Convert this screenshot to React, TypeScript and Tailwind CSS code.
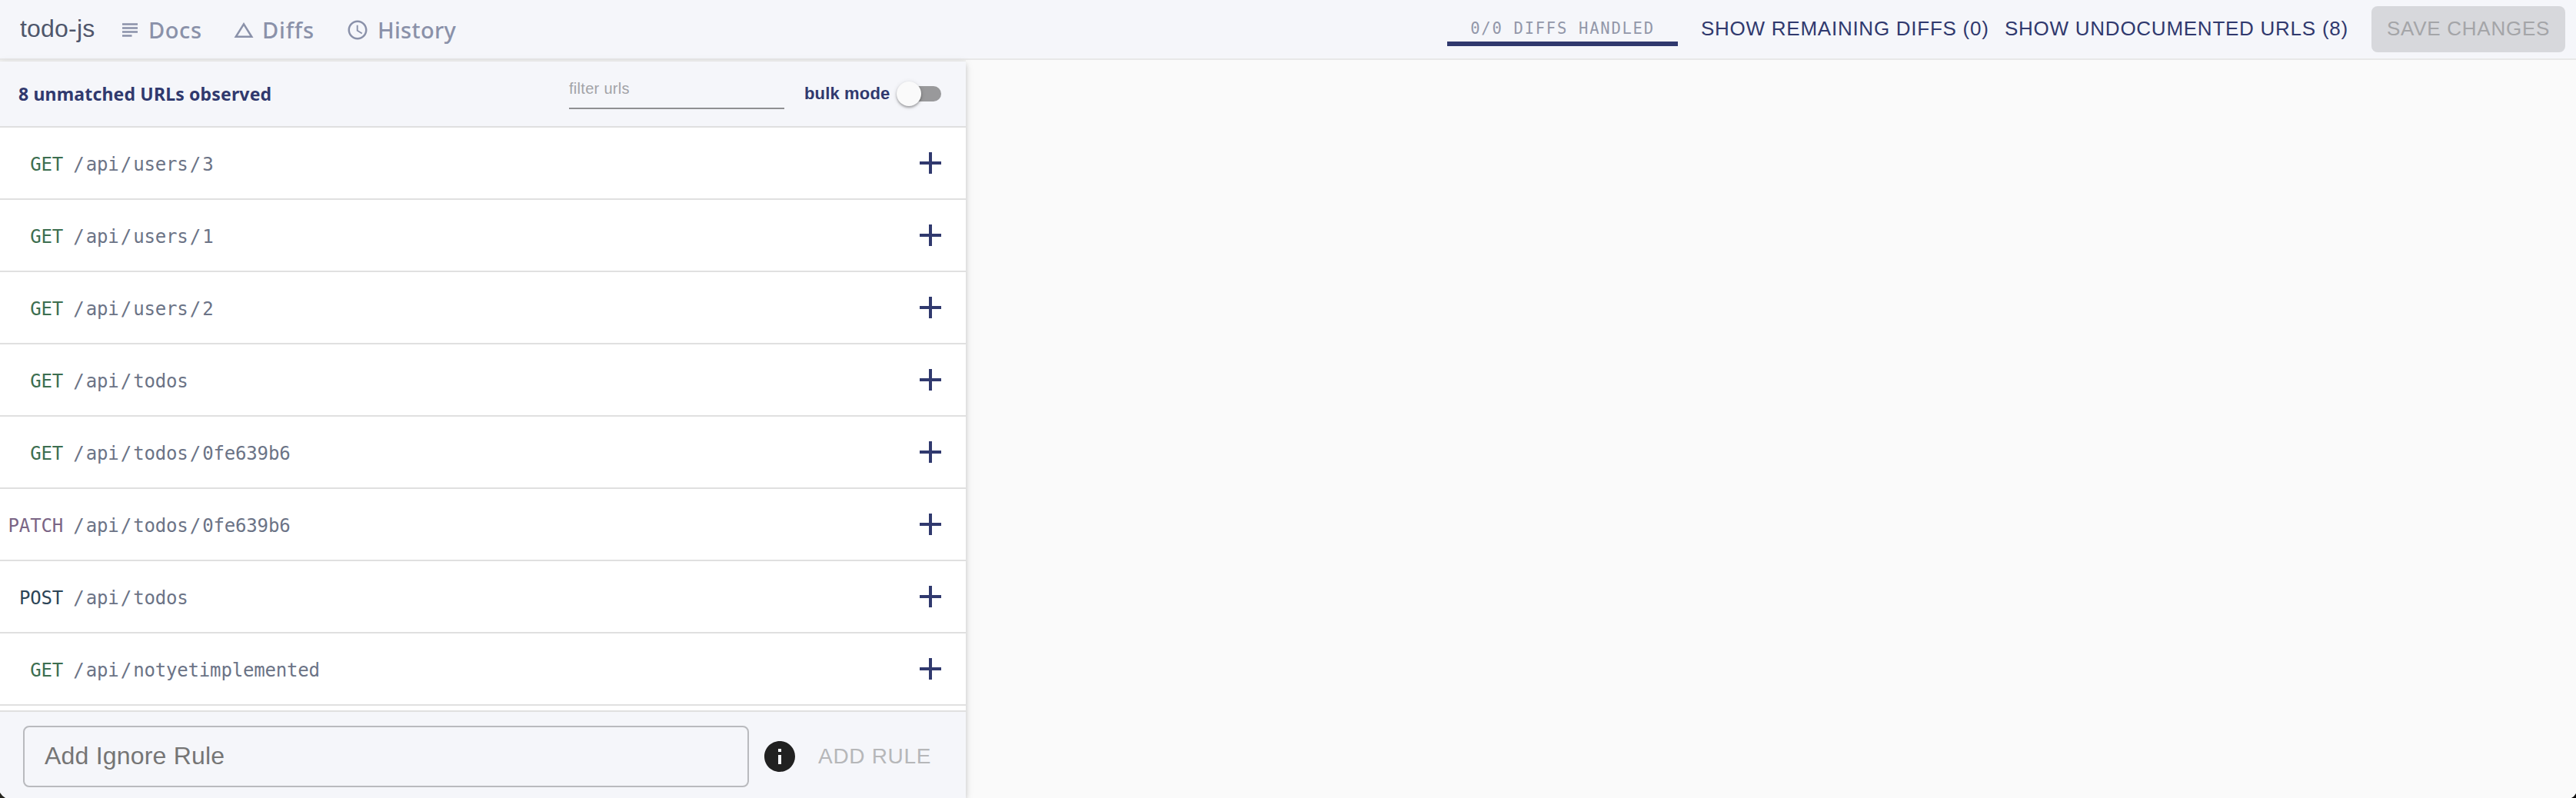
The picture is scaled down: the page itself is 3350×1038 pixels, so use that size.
import React from "react";
import { MdSubject, MdChangeHistory, MdAccessTime, MdInfo } from "react-icons/md";

type Row = { method: string; path: string };

const rows: Row[] = [
  { method: "GET", path: "/api/users/3" },
  { method: "GET", path: "/api/users/1" },
  { method: "GET", path: "/api/users/2" },
  { method: "GET", path: "/api/todos" },
  { method: "GET", path: "/api/todos/0fe639b6" },
  { method: "PATCH", path: "/api/todos/0fe639b6" },
  { method: "POST", path: "/api/todos" },
  { method: "GET", path: "/api/notyetimplemented" },
];

const methodColors: Record<string, string> = {
  GET: "text-[#3c6e50]",
  PATCH: "text-[#7a6585]",
  POST: "text-[#2c4557]",
};

function PathText({ path }: { path: string }) {
  const parts = path.split("/").filter(Boolean);
  return (
    <span className="ml-[11px] text-[#6b7386]">
      {parts.map((part, i) => (
        <React.Fragment key={i}>
          <span className="px-[2.2px]">/</span>
          <span>{part}</span>
        </React.Fragment>
      ))}
    </span>
  );
}

function UrlRow({ method, path }: Row) {
  return (
    <li className="flex h-[94px] shrink-0 items-center border-b-2 border-[#e0e0e0] bg-white pr-8">
      <div className="flex flex-1 pt-1 font-['DejaVu_Sans_Mono',monospace] text-[24px] leading-8 tracking-[-0.17px]">
        <span className={"w-[82px] text-right " + methodColors[method]}>{method}</span>
        <PathText path={path} />
      </div>
      <svg viewBox="0 0 28 28" className="size-7" fill="#30396e">
        <path d="M12 0h4v12h12v4H16v12h-4V16H0v-4h12z" />
      </svg>
    </li>
  );
}

function Header() {
  return (
    <header className="flex h-[78px] shrink-0 items-center border-b-2 border-[#e8e8e8] bg-[#f5f6fa]">
      <h1 className="w-[154px] pb-0.5 pl-[26px] text-[32px] leading-10 tracking-[0.2px] whitespace-nowrap text-[#4f566b]">todo-js</h1>
      <nav className="flex items-center pt-0.5 font-['Noto_Sans',sans-serif] text-[29px] leading-10 font-medium text-[#8a91a9]">
        <a className="flex w-[146px] items-center">
          <MdSubject className="size-[30px]" />
          <span className="pl-[9px] tracking-[0.6px]">Docs</span>
        </a>
        <a className="flex w-[150px] items-center">
          <MdChangeHistory className="ml-0.5 size-[30px]" />
          <span className="pl-[9px] tracking-[0.8px]">Diffs</span>
        </a>
        <a className="flex items-center">
          <MdAccessTime className="size-[30px]" />
          <span className="pl-[11px] tracking-[0.3px]">History</span>
        </a>
      </nav>
      <div className="flex flex-1 items-center justify-end pr-3.5">
        <div className="mr-[30px] flex h-[76px] w-[300px] flex-col items-center pt-[22px] font-['DejaVu_Sans_Mono',monospace] text-[20.5px] leading-[30px] tracking-[1.75px] text-[#9297a9]">
          <span className="whitespace-pre">0/0 DIFFS HANDLED</span>
          <div className="mt-0.5 h-1.5 w-full shrink-0 bg-[#30396e]" />
        </div>
        <div className="flex pb-0.5 text-[26px] leading-10 tracking-[0.743px] whitespace-nowrap text-[#30396e]">
          <span className="w-[395px]">SHOW REMAINING DIFFS (0)</span>
          <span className="w-[477px]">SHOW UNDOCUMENTED URLS (8)</span>
        </div>
        <button className="flex h-[60px] w-[252px] items-center justify-center rounded-lg bg-[#d7d8dc] pb-0.5 text-[26px] tracking-[0.743px] whitespace-nowrap text-[#a4a5a8]">
          SAVE CHANGES
        </button>
      </div>
    </header>
  );
}

function Toolbar() {
  return (
    <div className="flex h-[86px] shrink-0 items-center border-b-2 border-[#e0e0e0] bg-[#f5f6fa] pr-8">
      <h2 className="flex-1 pl-6 font-['Noto_Sans',sans-serif] text-[23px] leading-8 font-bold tracking-[0.17px] whitespace-nowrap text-[#30396e]">
        8 unmatched URLs observed
      </h2>
      <div className="h-10 w-[280px] border-b-2 border-[#8f8f92] text-[20px] leading-[26px] tracking-[0.3px] text-[#a2a3a7]">
        filter urls
      </div>
      <span className="ml-[26px] w-[120px] text-[22px] leading-8 font-bold tracking-[0.15px] whitespace-nowrap text-[#30396e]">
        bulk mode
      </span>
      <div className="relative flex h-8 w-[58px] items-center justify-end">
        <div className="h-5 w-[52px] rounded-full bg-[#99999b]" />
        <div className="absolute top-0 left-0 size-8 rounded-full bg-[#fafafa] shadow-[0_2px_3px_rgba(0,0,0,0.3),0_1px_6px_rgba(0,0,0,0.12)]" />
      </div>
    </div>
  );
}

function Footer() {
  return (
    <div className="flex flex-1 items-center border-t-2 border-[#e0e0e0] bg-[#f5f6fa] pt-1 pl-[30px] text-[#b6b7b9]">
      <div className="h-20 w-[944px] rounded-lg border-2 border-[#b9babe] pl-[26px] text-[32px] leading-[74px] tracking-[0.2px] text-[#757575]">
        Add Ignore Rule
      </div>
      <MdInfo className="ml-4 size-12 text-[#212121]" />
      <span className="ml-[26px] text-[28px] leading-10 tracking-[0.7px]">ADD RULE</span>
    </div>
  );
}

export default function App() {
  return (
    <div className="relative flex h-[1038px] w-[3350px] flex-col overflow-hidden bg-[#fafafa] font-['Liberation_Sans',Arial,sans-serif]">
      <Header />
      <main className="flex flex-1">
        <section className="flex w-[1256px] flex-col">
          <div className="h-0.5 bg-[#f1f1f0]" />
          <div className="flex flex-1 flex-col bg-white shadow-[0_4px_6px_rgba(0,0,0,0.12),0_2px_10px_rgba(0,0,0,0.12)]">
            <Toolbar />
            <ul className="flex h-[758px] flex-col">
              {rows.map((row, i) => (
                <UrlRow key={i} {...row} />
              ))}
            </ul>
            <Footer />
          </div>
        </section>
      </main>
      <svg viewBox="0 0 7 7" className="absolute bottom-0 left-0 size-[7px]" fill="#25251f">
        <path d="M0 0Q2.6 4.6 7 7H0z" />
      </svg>
      <svg viewBox="0 0 6 6" className="absolute right-0 bottom-0 size-[6px]" fill="#0c0c0c">
        <path d="M6 0Q4 4 0 6H6z" />
      </svg>
    </div>
  );
}
